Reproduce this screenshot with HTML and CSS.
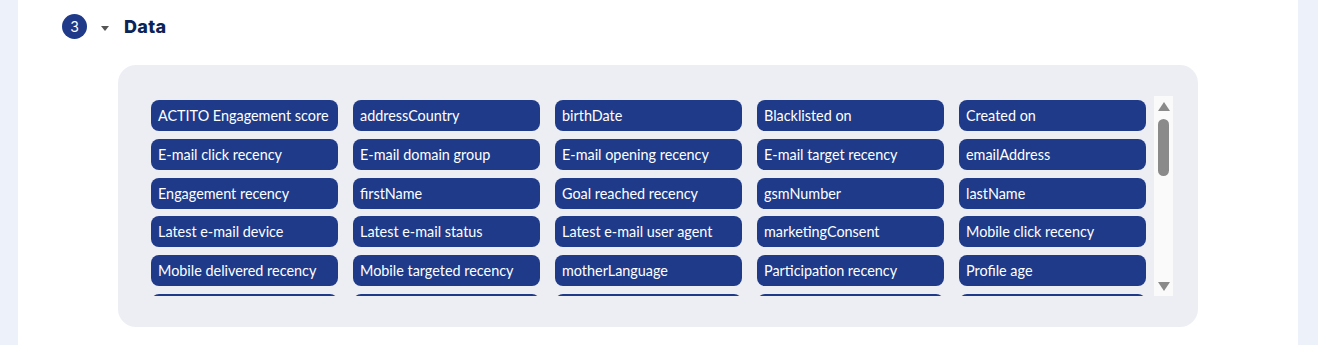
FILE: index.html
```html
<!DOCTYPE html>
<html>
   <head>
      <meta http-equiv="Content-Type" content="text/html; charset=UTF-8" />
      <title>Data</title>
      <link rel="stylesheet" href="styles.css">
   </head>
   <body>
      <div class="card">
         <div class="step">
            <span class="num">3</span>
            <span class="caret"></span>
            <h2 class="title">Data</h2>
         </div>
         <div class="panel">
            <div class="fields">
               <span class="chip">ACTITO Engagement score</span>
               <span class="chip">addressCountry</span>
               <span class="chip">birthDate</span>
               <span class="chip">Blacklisted on</span>
               <span class="chip">Created on</span>
               <span class="chip">E-mail click recency</span>
               <span class="chip">E-mail domain group</span>
               <span class="chip">E-mail opening recency</span>
               <span class="chip">E-mail target recency</span>
               <span class="chip">emailAddress</span>
               <span class="chip">Engagement recency</span>
               <span class="chip">firstName</span>
               <span class="chip">Goal reached recency</span>
               <span class="chip">gsmNumber</span>
               <span class="chip">lastName</span>
               <span class="chip">Latest e-mail device</span>
               <span class="chip">Latest e-mail status</span>
               <span class="chip">Latest e-mail user agent</span>
               <span class="chip">marketingConsent</span>
               <span class="chip">Mobile click recency</span>
               <span class="chip">Mobile delivered recency</span>
               <span class="chip">Mobile targeted recency</span>
               <span class="chip">motherLanguage</span>
               <span class="chip">Participation recency</span>
               <span class="chip">Profile age</span>
               <!-- next row is scrolled out of view -->
               <span class="chip"></span>
               <span class="chip"></span>
               <span class="chip"></span>
               <span class="chip"></span>
               <span class="chip"></span>
            </div>
            <div class="scrollbar">
               <span class="arrow up"></span>
               <span class="thumb"></span>
               <span class="arrow down"></span>
            </div>
         </div>
      </div>
   </body>
</html>
```

FILE: styles.css
```css
body { margin:0; background:#edf1f9; font-family:Lato,'Open Sans',sans-serif; }
.card { margin:0 20px 0 18px; background:#fff; height:345px; overflow:hidden; }

/* step header */
.step { display:flex; align-items:center; padding:14px 0 0 44px; height:25px; }
.num { width:25px; height:25px; border-radius:50%; background:#1e3a88; color:#fff; font-family:Inter,sans-serif; font-size:14px; display:flex; align-items:center; justify-content:center; }
.caret { width:0; height:0; border-left:4.5px solid transparent; border-right:4.5px solid transparent; border-top:5px solid #555; margin:4px 0 0 14px; }
.title { margin:0 0 0 15px; font-family:Inter,sans-serif; font-size:18px; font-weight:800; color:#0c2457; letter-spacing:.3px; }

/* field panel */
.panel { display:flex; gap:8px; width:1080px; box-sizing:border-box; margin:26px 0 0 100px; padding:31px 25px 31px 33px; background:#edeef4; border-radius:18px; }
.fields { flex:1; height:200px; overflow:hidden; box-sizing:border-box; padding-top:4px; display:grid; grid-template-columns:repeat(5,187px); grid-auto-rows:31px; column-gap:15px; row-gap:7.75px; align-content:start; }
.chip { background:#1e3a88; color:#fff; border-radius:8px; font-size:14.4px; padding:0 7px; display:flex; align-items:center; white-space:nowrap; overflow:hidden; }

.scrollbar { width:19px; height:200px; background:#fafafa; display:flex; flex-direction:column; align-items:center; }
.arrow { width:0; height:0; border-left:6px solid transparent; border-right:6px solid transparent; }
.arrow.up { border-bottom:9px solid #8a8a8a; margin-top:6px; }
.arrow.down { border-top:9px solid #8a8a8a; margin-top:auto; margin-bottom:5px; }
.thumb { width:11px; height:57px; border-radius:6px; background:#8a8a8a; margin-top:8px; }
```
